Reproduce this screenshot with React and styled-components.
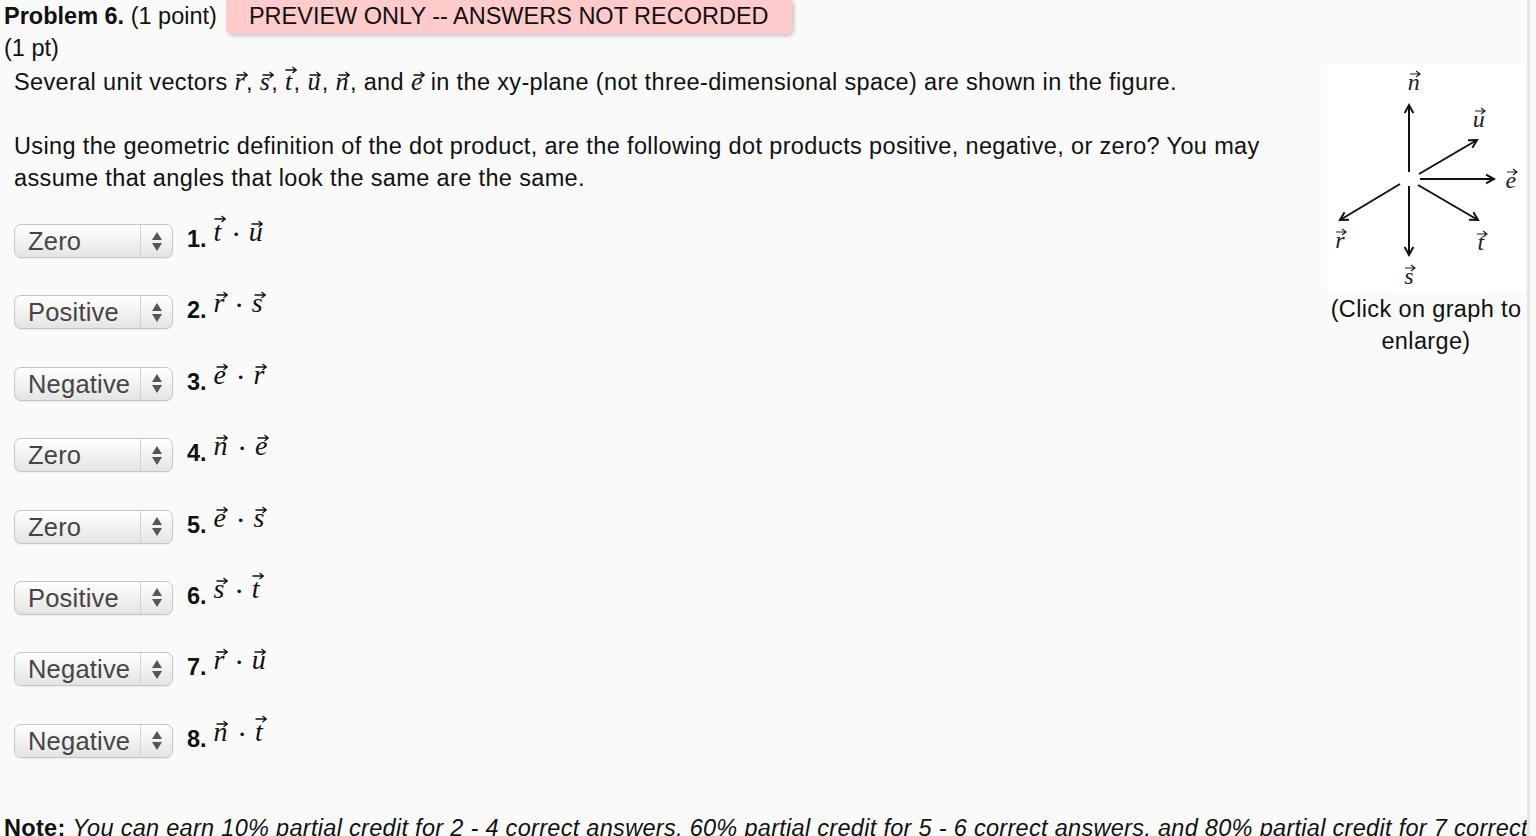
import React from "react";
import styled, { createGlobalStyle } from "styled-components";

const Global = createGlobalStyle`
  html, body { margin:0; padding:0; background:#fafafa; }
  body { font-family:"Liberation Sans", Arial, sans-serif; color:#111; overflow:hidden; }
`;

const Page = styled.div`
    width:1530px;
    height:836px;
    border-right:3px solid #e6e6e6;
    box-sizing:border-box;
    padding-left:4px;
    font-size:23.5px;
    line-height:32px;
    overflow:hidden;
`;

const HeaderRow = styled.div`
    display:flex;
    align-items:flex-start;
    height:32px;
`;

const Title = styled.span`
    white-space:nowrap;
    b { font-weight:700; }
`;

const PreviewBadge = styled.div`
    margin-left:9px;
    height:34px;
    line-height:32px;
    padding:0 23px 0 23px;
    background:#ffcaca;
    border-radius:0 0 6px 6px;
    box-shadow:2px 2px 4px rgba(0,0,0,0.22);
    white-space:nowrap;
    color:#111;
`;

const Points = styled.div`
    height:32px;
`;

const Content = styled.div`
    display:flex;
    justify-content:space-between;
`;

const MainCol = styled.div`
    padding-left:10px;
    padding-top:2px;
    flex:1;
`;

const Para = styled.p`
    margin:0 0 ${p => p.gap || 0}px 0;
    max-width:1275px;
    letter-spacing:0.36px;
`;

const Rows = styled.div`
    margin-top:30px;
    display:grid;
    grid-auto-rows:34px;
    row-gap:37.4px;
`;

const Row = styled.div`
    display:flex;
    align-items:center;
`;

const SelectBox = styled.div`
    width:159px;
    height:34px;
    box-sizing:border-box;
    border:1px solid #c6c6c6;
    border-radius:7px;
    background:linear-gradient(#ffffff 0%, #f3f3f3 45%, #e4e4e4 100%);
    box-shadow:inset 0 1px 0 #fff, 0 1px 1px rgba(0,0,0,0.06);
    display:flex;
    align-items:center;
`;

const SelectText = styled.span`
    flex:1;
    padding-left:13px;
    font-size:25.5px;
    color:#454545;
    letter-spacing:0.2px;
`;

const ArrowPart = styled.span`
    width:31px;
    height:100%;
    border-left:1px solid #d2d2d2;
    display:flex;
    flex-direction:column;
    align-items:center;
    justify-content:center;
    gap:3px;
`;

const Tri = styled.span`
    width:0;
    height:0;
    border-left:5px solid transparent;
    border-right:5px solid transparent;
    ${p => p.up ? "border-bottom:8px solid #555;" : "border-top:8px solid #555;"}
`;

const Label = styled.span`
    margin-left:14px;
    font-weight:700;
    margin-top:-4px;
`;

const Expr = styled.span`
    margin-left:7px;
    display:inline-flex;
    align-items:baseline;
    margin-top:-14px;
`;

const VecWrap = styled.span`
    position:relative;
    display:inline-block;
    font-family:"Liberation Serif", "Times New Roman", serif;
    font-style:italic;
    font-size:${p => p.size}px;
    line-height:${p => p.size}px;
    padding-right:1px;
`;

const VecArrow = styled.svg`
    position:absolute;
    left:${p => p.off}px;
    top:${p => p.top}px;
`;

const Dot = styled.span`
    font-family:"Liberation Serif", serif;
    margin:0 9px 0 10px;
    font-size:22px;
    font-weight:700;
`;

const Figure = styled.div`
    width:198px;
    margin-right:2px;
    text-align:center;
    letter-spacing:0.36px;
`;

const FigureBox = styled.div`
    width:198px;
    height:229px;
    background:#fff;
`;

const Caption = styled.div`
    color:#111;
`;

const Note = styled.div`
    margin-top:54px;
    white-space:nowrap;
    letter-spacing:0.3px;
    b { font-weight:700; }
    i { font-style:italic; }
`;

function Vec({ c, size = 26 }) {
    const tall = c === "t";
    const top = tall ? -3 : 2;
    return (
        <VecWrap size={size}>
            <VecArrow off={tall ? 0 : 2} top={top} width="12" height="8" viewBox="0 0 12 8">
                <path d="M0.5 4 H11 M7.5 1 L11.3 4 L7.5 7" stroke="#111" strokeWidth="1.3" fill="none" />
            </VecArrow>
            {c}
        </VecWrap>
    );
}

const rows = [
    ["Zero", "t", "u"],
    ["Positive", "r", "s"],
    ["Negative", "e", "r"],
    ["Zero", "n", "e"],
    ["Zero", "e", "s"],
    ["Positive", "s", "t"],
    ["Negative", "r", "u"],
    ["Negative", "n", "t"],
];

function Arrow({ x1, y1, x2, y2 }) {
    const a = Math.atan2(y2 - y1, x2 - x1);
    const l = 9;
    const p1 = [x2 - l * Math.cos(a - 0.5), y2 - l * Math.sin(a - 0.5)];
    const p2 = [x2 - l * Math.cos(a + 0.5), y2 - l * Math.sin(a + 0.5)];
    return (
        <g stroke="#111" strokeWidth="2" fill="none">
            <line x1={x1} y1={y1} x2={x2} y2={y2} />
            <path d={`M${p1[0]} ${p1[1]} L${x2} ${y2} L${p2[0]} ${p2[1]}`} />
        </g>
    );
}

function FigLabel({ x, y, c }) {
    return (
        <g>
            <text x={x} y={y} fontFamily="Liberation Serif, serif" fontStyle="italic" fontSize="24" fill="#222" textAnchor="middle">{c}</text>
            <path d={`M${x - 4} ${y - 16} H${x + 5} M${x + 2} ${y - 19} L${x + 6} ${y - 16} L${x + 2} ${y - 13}`} stroke="#222" strokeWidth="1.2" fill="none" />
        </g>
    );
}

function VectorFigure() {
    return (
        <svg width="198" height="229" viewBox="0 0 198 229">
            <Arrow x1={82} y1={108} x2={82} y2={41} />
            <Arrow x1={92} y1={110} x2={150} y2={76} />
            <Arrow x1={93} y1={115} x2={167} y2={115} />
            <Arrow x1={91} y1={121} x2={151} y2={156} />
            <Arrow x1={82} y1={122} x2={82} y2={191} />
            <Arrow x1={73} y1={120} x2={13} y2={156} />
            <FigLabel x={87} y={26} c="n" />
            <FigLabel x={152} y={63} c="u" />
            <FigLabel x={184} y={124} c="e" />
            <FigLabel x={154} y={186} c="t" />
            <FigLabel x={82} y={220} c="s" />
            <FigLabel x={13} y={184} c="r" />
        </svg>
    );
}

export default function App() {
    return (
        <>
            <Global />
            <Page>
                <HeaderRow>
                    <Title><b>Problem 6.</b> (1 point)</Title>
                    <PreviewBadge>PREVIEW ONLY -- ANSWERS NOT RECORDED</PreviewBadge>
                </HeaderRow>
                <Points>(1 pt)</Points>
                <Content>
                    <MainCol>
                        <Para gap={32}>
                            Several unit vectors <Vec c="r" />, <Vec c="s" />, <Vec c="t" />, <Vec c="u" />, <Vec c="n" />, and <Vec c="e" /> in the xy-plane (not three-dimensional space) are shown in the figure.
                        </Para>
                        <Para>
                            Using the geometric definition of the dot product, are the following dot products positive, negative, or zero? You may assume that angles that look the same are the same.
                        </Para>
                        <Rows>
                            {rows.map((r, i) => (
                                <Row key={i}>
                                    <SelectBox>
                                        <SelectText>{r[0]}</SelectText>
                                        <ArrowPart><Tri up /><Tri /></ArrowPart>
                                    </SelectBox>
                                    <Label>{i + 1}.</Label>
                                    <Expr>
                                        <Vec c={r[1]} size={28} />
                                        <Dot>·</Dot>
                                        <Vec c={r[2]} size={28} />
                                    </Expr>
                                </Row>
                            ))}
                        </Rows>
                    </MainCol>
                    <Figure>
                        <FigureBox><VectorFigure /></FigureBox>
                        <Caption>(Click on graph to enlarge)</Caption>
                    </Figure>
                </Content>
                <Note>
                    <b>Note:</b> <i>You can earn 10% partial credit for 2 - 4 correct answers, 60% partial credit for 5 - 6 correct answers, and 80% partial credit for 7 correct answers.</i>
                </Note>
            </Page>
        </>
    );
}
